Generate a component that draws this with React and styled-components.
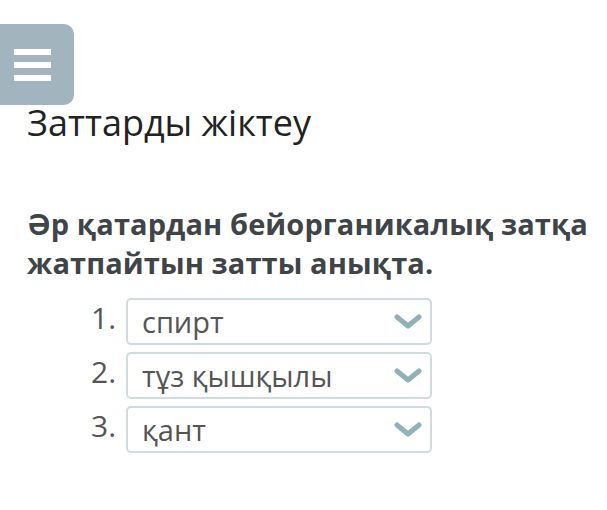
import React from "react";
import styled, { createGlobalStyle } from "styled-components";

const Global = createGlobalStyle`
  body {
    margin: 0;
    background: #fff;
    font-family: "Open Sans", "Noto Sans", sans-serif;
  }
`;

const Page = styled.div`
  width: 607px;
  height: 510px;
  padding-top: 24px;
  box-sizing: border-box;
  overflow: hidden;
`;

const MenuButton = styled.div`
  width: 74px;
  height: 81px;
  background: #a2b5bf;
  border-radius: 0 10px 10px 0;
  display: flex;
  flex-direction: column;
  justify-content: center;
  gap: 7px;
  padding-left: 14px;
  box-sizing: border-box;
`;

const Bar = styled.span`
  display: block;
  width: 37px;
  height: 6px;
  background: #fff;
`;

const Content = styled.div`
  padding: 0 10px 0 27px;
  margin-top: -4px;
`;

const Title = styled.h1`
  margin: 0;
  font-size: 36px;
  font-weight: 400;
  line-height: 44px;
  color: #222;
`;

const Question = styled.p`
  margin: 59px 0 0;
  font-size: 29px;
  font-weight: 700;
  line-height: 39px;
  color: #3f4449;
  letter-spacing: 0.1px;
`;

const List = styled.div`
  display: flex;
  flex-direction: column;
  gap: 7px;
  margin-top: 16px;
  padding-left: 64px;
`;

const Row = styled.div`
  display: flex;
  align-items: flex-start;
  gap: 11px;
`;

const Num = styled.span`
  font-size: 30px;
  color: #555;
  line-height: 40px;
  width: 24px;
`;

const Select = styled.div`
  width: 306px;
  height: 47px;
  box-sizing: border-box;
  border: 2px solid #cfdcdf;
  border-radius: 5px;
  display: flex;
  align-items: center;
  justify-content: space-between;
  padding: 0 8px 0 14px;
  font-size: 29px;
  color: #555;
`;

const Chevron = () => (
  <svg width="28" height="16" viewBox="0 0 28 16">
    <path d="M3 3 L14 12 L25 3" fill="none" stroke="#8fb1b8" strokeWidth="5" strokeLinecap="round" strokeLinejoin="round" />
  </svg>
);

const items = ["спирт", "тұз қышқылы", "қант"];

export default function App() {
  return (
    <Page>
      <Global />
      <MenuButton>
        <Bar />
        <Bar />
        <Bar />
      </MenuButton>
      <Content>
        <Title>Заттарды жіктеу</Title>
        <Question>Әр қатардан бейорганикалық затқа жатпайтын затты анықта.</Question>
        <List>
          {items.map((it, i) => (
            <Row key={it}>
              <Num>{i + 1}.</Num>
              <Select>
                <span>{it}</span>
                <Chevron />
              </Select>
            </Row>
          ))}
        </List>
      </Content>
    </Page>
  );
}
